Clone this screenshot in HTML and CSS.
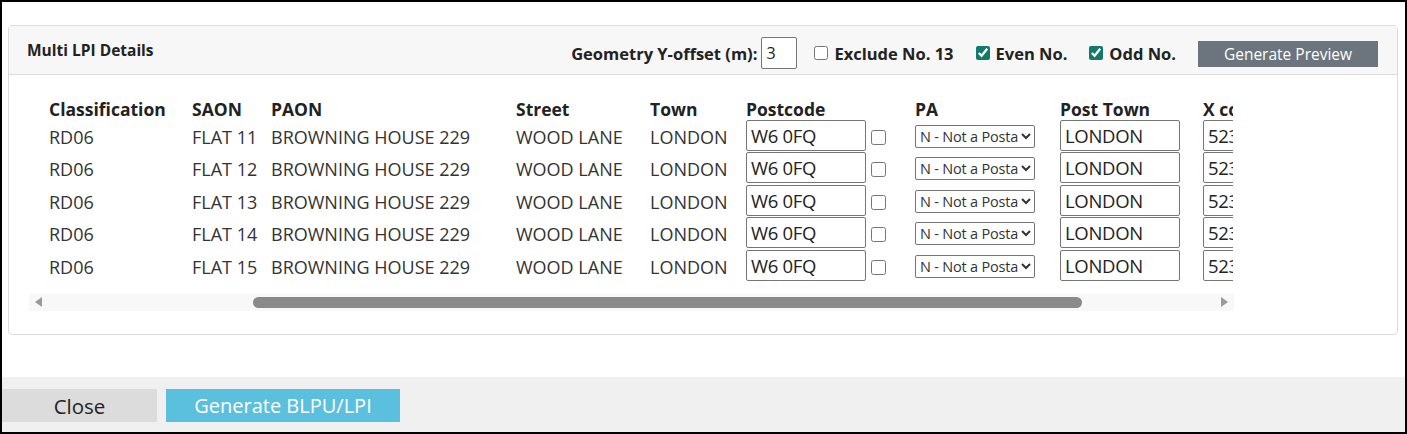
FILE: index.html
```html
<!DOCTYPE html>
<html>
<head>
    <title>Multi LPI Details</title>
    <link rel="stylesheet" href="styles.css">
</head>
<body>
    <div class="dialog">
        <div class="dialog-body">
            <div class="card">
                <div class="card-header">
                    <div class="card-title">Multi LPI Details</div>
                    <div class="controls">
                        <label class="ctl">Geometry Y-offset (m): <input class="offset" type="text" value="3"></label>
                        <label class="ctl chk"><input type="checkbox"> Exclude No. 13</label>
                        <label class="ctl chk"><input type="checkbox" checked> Even No.</label>
                        <label class="ctl chk"><input type="checkbox" checked> Odd No.</label>
                        <button class="btn-preview">Generate Preview</button>
                    </div>
                </div>
                <div class="card-body">
                    <div class="table-wrap">
                        <table class="lpi-table">
                            <colgroup>
                                <col style="width:143px"><col style="width:79px"><col style="width:245px">
                                <col style="width:134px"><col style="width:96px"><col style="width:125px">
                                <col style="width:44px"><col style="width:145px"><col style="width:143px">
                                <col style="width:145px"><col style="width:145px">
                            </colgroup>
                            <thead>
                                <tr>
                                    <th>Classification</th><th>SAON</th><th>PAON</th><th>Street</th><th>Town</th>
                                    <th>Postcode</th><th></th><th>PA</th><th>Post Town</th><th>X coord</th><th>Y coord</th>
                                </tr>
                            </thead>
                            <tbody id="rows"></tbody>
                        </table>
                    </div>
                    <div class="hscroll">
                        <span class="arrow left"></span>
                        <div class="rail"><div class="thumb"></div></div>
                        <span class="arrow right"></span>
                    </div>
                </div>
            </div>
        </div>
        <div class="dialog-footer">
            <button class="btn-close">Close</button>
            <button class="btn-generate">Generate BLPU/LPI</button>
        </div>
    </div>

    <script>
        const flats = [11, 12, 13, 14, 15];
        const tbody = document.getElementById('rows');

        flats.forEach(n => {
            const tr = document.createElement('tr');
            tr.innerHTML = `
                <td class="txt">RD06</td>
                <td class="txt">FLAT ${n}</td>
                <td class="txt">BROWNING HOUSE 229</td>
                <td class="txt">WOOD LANE</td>
                <td class="txt">LONDON</td>
                <td><input class="cell-input" type="text" value="W6 0FQ"></td>
                <td><input class="cell-chk" type="checkbox"></td>
                <td><select class="cell-select"><option>N - Not a Postal Address</option></select></td>
                <td><input class="cell-input" type="text" value="LONDON"></td>
                <td><input class="cell-input" type="text" value="523150"></td>
                <td><input class="cell-input" type="text" value="179870"></td>`;
            tbody.appendChild(tr);
        });
    </script>
</body>
</html>
```

FILE: styles.css
```css
* {
    box-sizing: border-box;
}
html, body {
    margin: 0;
    padding: 0;
    background: #fff;
}
body {
    font-family: "Open Sans", "Noto Sans", sans-serif;
    color: #212529;
}
.dialog {
    width: 1407px;
    height: 434px;
    border: 2px solid #000;
    display: flex;
    flex-direction: column;
    background: #fff;
}
.dialog-body {
    flex: 1;
    padding: 23px 7px 0 6px;
}
.card {
    border: 1px solid #dcdcdc;
    border-radius: 4px;
    height: 310px;
}
.card-header {
    height: 49px;
    background: #f7f7f7;
    border-bottom: 1px solid #dcdcdc;
    display: flex;
    align-items: flex-start;
    padding: 0 19px 0 18px;
}
.card-title {
    font-size: 15.5px;
    font-weight: bold;
    margin-top: 13px;
    color: #222;
}
.controls {
    margin-left: auto;
    display: flex;
    align-items: center;
    margin-top: 11px;
    font-size: 16.5px;
    font-weight: bold;
    color: #222;
}
.ctl {
    display: flex;
    align-items: center;
}
.offset {
    width: 36px;
    height: 32px;
    margin-left: 4px;
    border: 1px solid #767676;
    border-radius: 2px;
    font: 16px "Open Sans", sans-serif;
    padding: 0 4px;
    color: #222;
}
.chk {
    margin-left: 17px;
}
.chk + .chk {
    margin-left: 22px;
}
.chk input {
    width: 14px;
    height: 14px;
    margin: 0 6px 0 0;
    accent-color: #117a68;
}
.btn-preview {
    margin-left: 22px;
    width: 180px;
    height: 26px;
    margin-top: 2px;
    background: #6c757d;
    color: #fff;
    border: none;
    font: 15.5px "Open Sans", sans-serif;
}
.card-body {
    padding: 20px 0 0 19px;
}
.table-wrap {
    width: 1205px;
    overflow: hidden;
    padding-left: 21px;
}
.lpi-table {
    border-collapse: collapse;
    table-layout: fixed;
    width: 1444px;
    font-size: 18px;
    color: #333;
}
.lpi-table th {
    text-align: left;
    font-weight: bold;
    font-size: 17.5px;
    padding: 0;
    height: 24px;
    line-height: 20px;
    vertical-align: bottom;
    color: #222;
}
.lpi-table td {
    padding: 0;
    height: 32.5px;
    white-space: nowrap;
}
.lpi-table td.txt {
    padding-top: 3px;
}
.cell-input {
    width: 120px;
    height: 31px;
    border: 1px solid #767676;
    border-radius: 2px;
    font: 18.5px "Open Sans", sans-serif;
    color: #222;
    padding: 0 4px;
    letter-spacing: -0.3px;
}
.cell-chk {
    width: 15px;
    height: 15px;
    margin: 0;
    vertical-align: middle;
}
.cell-select {
    width: 120px;
    height: 23px;
    font: 14.5px "Open Sans", sans-serif;
    border: 1px solid #767676;
    border-radius: 2px;
    color: #333;
    background: #fff;
    letter-spacing: -0.2px;
}
.hscroll {
    width: 1205px;
    height: 17px;
    margin-top: 12px;
    margin-left: 1px;
    background: #f8f8f8;
    display: flex;
    align-items: center;
}
.arrow {
    width: 0;
    height: 0;
    border-top: 5px solid transparent;
    border-bottom: 5px solid transparent;
}
.arrow.left {
    border-right: 7px solid #9a9a9a;
    margin-left: 6px;
}
.arrow.right {
    border-left: 7px solid #9a9a9a;
    margin-right: 6px;
}
.rail {
    flex: 1;
    height: 11px;
    padding: 0 139px 0 211px;
}
.thumb {
    height: 11px;
    background: #8a8a8a;
    border-radius: 6px;
}
.dialog-footer {
    height: 55px;
    background: #f0f0f0;
    display: flex;
    align-items: flex-start;
    padding-top: 12px;
    gap: 9px;
}
.btn-close {
    width: 155px;
    height: 33px;
    background: #dcdcdc;
    border: none;
    font: 20.5px "Open Sans", sans-serif;
    color: #222;
}
.btn-generate {
    width: 234px;
    height: 33px;
    background: #5bc0de;
    border: none;
    font: 20px "Open Sans", sans-serif;
    color: #fff;
}
```
